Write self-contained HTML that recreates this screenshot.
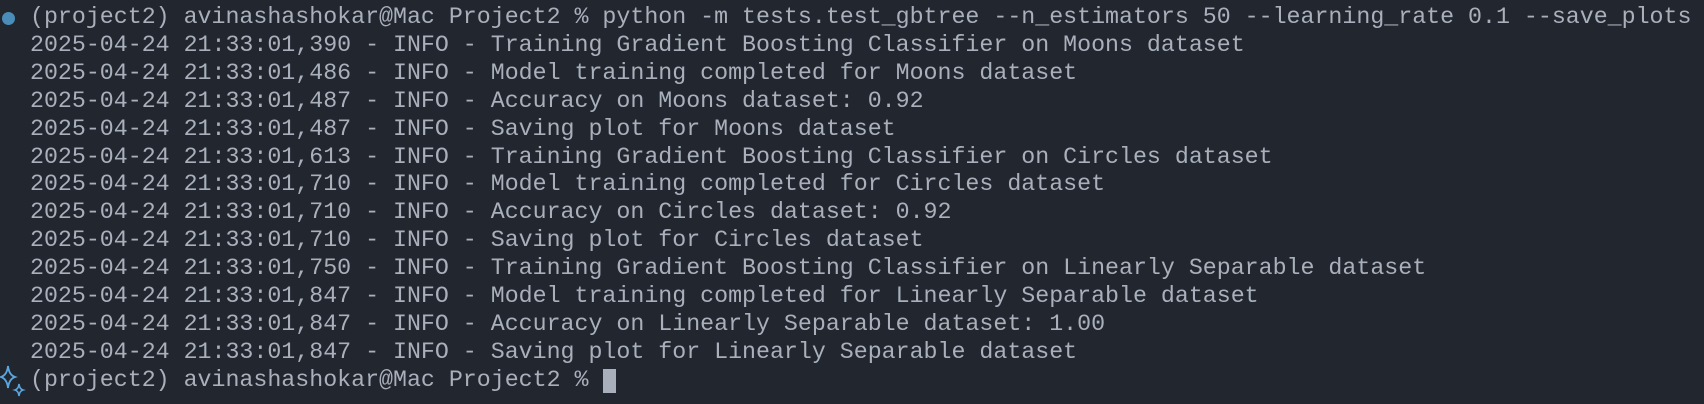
<!DOCTYPE html>
<html><head><meta charset="utf-8"><style>
html,body{margin:0;padding:0;width:1704px;height:404px;background:#22262e;overflow:hidden}
.t{position:absolute;left:30px;top:4px;font-family:"Liberation Mono","DejaVu Sans Mono",monospace;font-size:23.28px;line-height:27.9px;color:#a9b0bb;white-space:pre}
.dot{position:absolute;left:2px;top:12px;width:13px;height:13px;border-radius:50%;background:#4a8db8}
.cur{position:absolute;left:603px;top:369px;width:13px;height:24px;background:#a9b0bb}
</style></head><body>
<div class="dot"></div>
<svg style="position:absolute;left:0;top:364px" width="28" height="34" viewBox="0 0 28 34">
<path d="M8 2 Q9 11 15 13 Q9 15 8 24 Q7 15 1 13 Q7 11 8 2Z" fill="none" stroke="#5aa7e0" stroke-width="1.8"/>
<path d="M19 20 Q19.5 25 23 26 Q19.5 27 19 32 Q18.5 27 15 26 Q18.5 25 19 20Z" fill="none" stroke="#5aa7e0" stroke-width="1.6"/>
</svg>
<div class="t">(project2) avinashashokar@Mac Project2 % python -m tests.test_gbtree --n_estimators 50 --learning_rate 0.1 --save_plots
2025-04-24 21:33:01,390 - INFO - Training Gradient Boosting Classifier on Moons dataset
2025-04-24 21:33:01,486 - INFO - Model training completed for Moons dataset
2025-04-24 21:33:01,487 - INFO - Accuracy on Moons dataset: 0.92
2025-04-24 21:33:01,487 - INFO - Saving plot for Moons dataset
2025-04-24 21:33:01,613 - INFO - Training Gradient Boosting Classifier on Circles dataset
2025-04-24 21:33:01,710 - INFO - Model training completed for Circles dataset
2025-04-24 21:33:01,710 - INFO - Accuracy on Circles dataset: 0.92
2025-04-24 21:33:01,710 - INFO - Saving plot for Circles dataset
2025-04-24 21:33:01,750 - INFO - Training Gradient Boosting Classifier on Linearly Separable dataset
2025-04-24 21:33:01,847 - INFO - Model training completed for Linearly Separable dataset
2025-04-24 21:33:01,847 - INFO - Accuracy on Linearly Separable dataset: 1.00
2025-04-24 21:33:01,847 - INFO - Saving plot for Linearly Separable dataset
(project2) avinashashokar@Mac Project2 % </div>
<div class="cur"></div>
</body></html>
